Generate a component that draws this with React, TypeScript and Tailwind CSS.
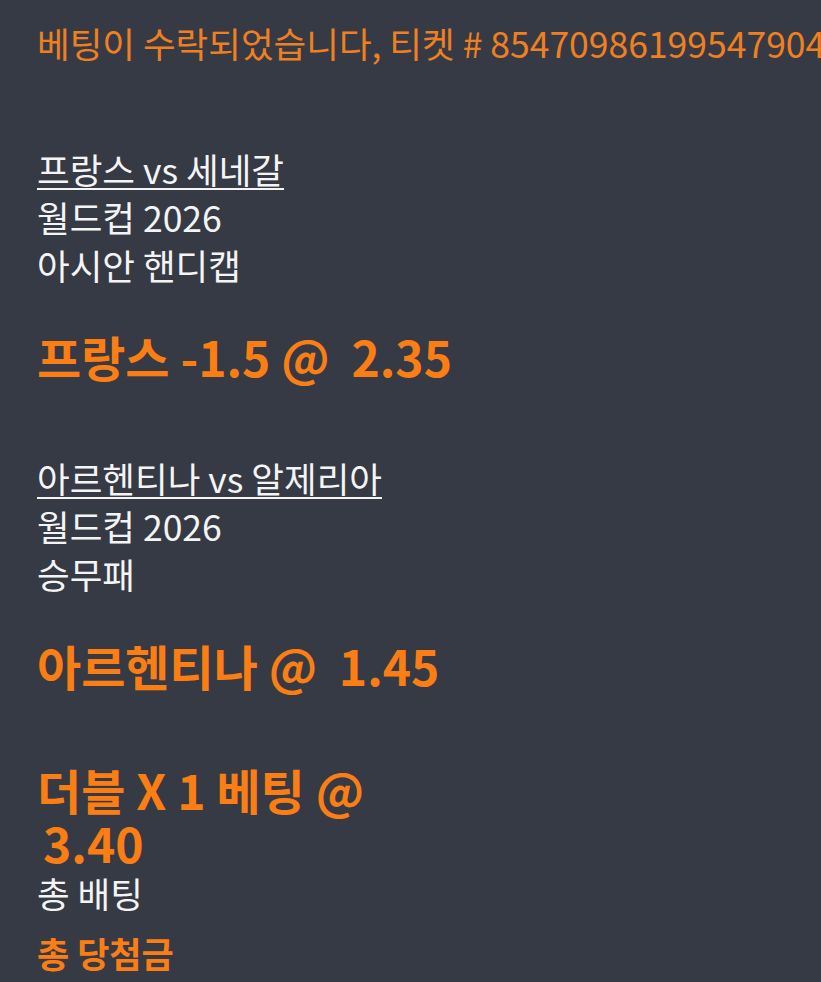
const FONT = '"Noto Sans CJK KR", "Noto Sans", sans-serif';

type Leg = {
  match: string;
  league: string;
  market: string;
  pick: string;
};

const legs: Leg[] = [
  { match: '프랑스 vs 세네갈', league: '월드컵 2026', market: '아시안 핸디캡', pick: '프랑스 -1.5 @\u00a0 2.35' },
  { match: '아르헨티나 vs 알제리아', league: '월드컵 2026', market: '승무패', pick: '아르헨티나 @\u00a0 1.45' },
];

function LegBlock({ leg }: { leg: Leg }) {
  return (
    <div>
      <div className="text-[35.5px] leading-[48px] text-[#f4f4f4]">
        <div className="underline decoration-2 underline-offset-[4px]">{leg.match}</div>
        <div>{leg.league}</div>
        <div>{leg.market}</div>
      </div>
      <div className="mt-[37px] text-[48px] leading-[60px] font-bold text-[#fb7e14]">{leg.pick}</div>
    </div>
  );
}

export default function App() {
  return (
    <div className="min-h-[982px] w-full overflow-hidden bg-[#363a45] pl-[37px] pt-[19px]" style={{ fontFamily: FONT }}>
      <div className="whitespace-nowrap text-[35.5px] leading-[48px] text-[#f0801f]">
        베팅이 수락되었습니다, 티켓 # 854709861995479049
      </div>

      <div className="mt-[78px] flex flex-col gap-[68px]">
        {legs.map((leg) => (
          <LegBlock key={leg.match} leg={leg} />
        ))}

        <div>
          <div className="text-[48px] leading-[53px] font-bold text-[#fb7e14]">
            <div>더블 X 1 베팅 @</div>
            <div className="pl-[6px]">3.40</div>
          </div>
          <div className="text-[35.5px] leading-[48px] text-[#f4f4f4]">총 배팅</div>
          <div className="mt-[11px] text-[35px] leading-[50px] font-bold text-[#fb7e14]">총 당첨금</div>
        </div>
      </div>
    </div>
  );
}
